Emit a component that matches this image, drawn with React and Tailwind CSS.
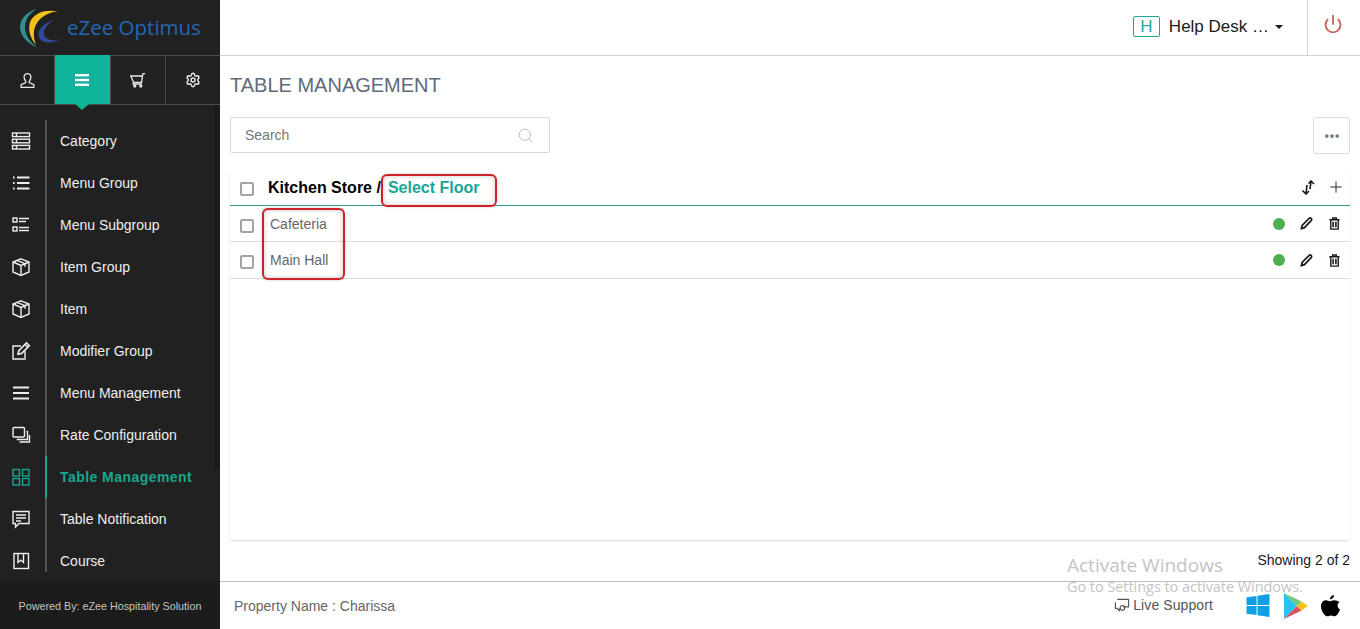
import { Search, Plus, Power, Ellipsis, Settings } from 'lucide-react'

const font = { fontFamily: '"Liberation Sans", Arial, sans-serif' }

// line icons traced from the sidebar
const icons = {
  category: (
    <>
      <rect x="1.5" y="2" width="17" height="3.6" />
      <rect x="1.5" y="8.2" width="17" height="3.6" />
      <rect x="1.5" y="14.4" width="17" height="3.6" />
      <path d="M5.5 2v3.6M5.5 8.2v3.6M5.5 14.4V18" />
    </>
  ),
  list: (
    <>
      <path d="M6 4.5h12.5M6 10h12.5M6 15.5h12.5" strokeWidth="1.8" />
      <path d="M2 4.5h1.6M2 10h1.6M2 15.5h1.6" strokeWidth="1.8" />
    </>
  ),
  sublist: (
    <>
      <rect x="2" y="3" width="4" height="4" />
      <rect x="2" y="12" width="4" height="4" />
      <path d="M8 3.5h10M8 6.5h7M8 12.5h10M8 15.5h10" />
    </>
  ),
  box: (
    <>
      <path d="M10 1.8 18 5v10l-8 3.5L2 15V5z" />
      <path d="M2 5l8 3.4L18 5M10 8.4v10M6 3.4l8 3.3v3" />
    </>
  ),
  edit: (
    <>
      <path d="M14 10v8H2V5h8" />
      <path d="M7 13.2l.8-3.5L15.5 2l2.8 2.8-7.7 7.6z" strokeWidth="1.6" />
      <path d="M14 3.5l2.8 2.8" />
    </>
  ),
  menu: <path d="M2 4.5h16M2 10h16M2 15.5h16" strokeWidth="1.8" />,
  copies: (
    <>
      <rect x="2" y="2.5" width="11.5" height="9.5" rx="1" />
      <path d="M15.5 6.5h1v8h-10v-1M18.5 10v7h-10" />
    </>
  ),
  grid: (
    <>
      <rect x="2" y="2.5" width="6.5" height="6.5" />
      <rect x="11.5" y="2.5" width="6.5" height="6.5" />
      <rect x="2" y="11.5" width="6.5" height="6.5" />
      <rect x="11.5" y="11.5" width="6.5" height="6.5" />
    </>
  ),
  chat: (
    <>
      <path d="M2 2.5h16v12H8l-3.5 3.5v-3.5H2z" />
      <path d="M5 6h10M5 9h10M5 12h5" />
    </>
  ),
  book: (
    <>
      <rect x="3" y="2.5" width="14.5" height="15" />
      <path d="M7 2.5v9l2.8-2.4 2.7 2.4v-9" />
    </>
  ),
}

const menuItems = [
  ['Category', 'category'],
  ['Menu Group', 'list'],
  ['Menu Subgroup', 'sublist'],
  ['Item Group', 'box'],
  ['Item', 'box'],
  ['Modifier Group', 'edit'],
  ['Menu Management', 'menu'],
  ['Rate Configuration', 'copies'],
  ['Table Management', 'grid', true],
  ['Table Notification', 'chat'],
  ['Course', 'book'],
]

function LineIcon({ name, className }) {
  return (
    <svg viewBox="0 0 20 20" fill="none" stroke="currentColor" strokeWidth="1.4" className={className}>
      {icons[name]}
    </svg>
  )
}

function Logo() {
  return (
    <svg viewBox="20 9 40 40" className="w-[40px] h-[40px] shrink-0">
      <path d="M37 9.5C24 14 20 22 20 28c0 9 8 17 17 20.5C29 42 24.5 35 25 27c.5-7 5-13 12-17.5z" fill="#2f8f8c" />
      <path d="M58 12.5C47 10 36 13 31 21c-4 8-1 18 5 25-3-8-3-16 1-22 4-6.5 12-11 21-11.5z" fill="#f2c21a" />
      <path d="M54 21c-8 2-14 7-15.5 13-.5 6 4.5 10 10.5 9.5 4 0 8-1.500 11-3-7 1.500-13 .5-15.500-3.500C42 32 47 25 54 21z" fill="#34479a" />
    </svg>
  )
}

function NavTab({ active, children, last }) {
  return (
    <div
      className={`relative flex-1 flex items-center justify-center ${
        active ? 'bg-[#0fb39a] text-white h-[49px] -mt-px' : 'text-[#e8e8e8] h-[48px]'
      } ${last ? '' : 'border-r border-[#4a4a4a]'}`}
    >
      {children}
      {active && (
        <span className="absolute left-1/2 -translate-x-1/2 top-full w-0 h-0 border-l-[7px] border-r-[7px] border-t-[6px] border-l-transparent border-r-transparent border-t-[#0fb39a]" />
      )}
    </div>
  )
}

function Sidebar() {
  return (
    <aside className="w-[220px] shrink-0 h-full flex flex-col bg-[#212121]">
      <div className="h-[56px] shrink-0 flex items-center pl-[20px] border-b border-[#4a4a4a]">
        <Logo />
        <span className="text-[20.5px] text-[#2468b4] ml-[7px] pb-[1px]" style={{ fontFamily: '"Open Sans", sans-serif' }}>
          eZee Optimus
        </span>
      </div>
      <div className="flex shrink-0 border-b border-[#4a4a4a]">
        <NavTab>
          <svg viewBox="0 0 20 20" fill="none" stroke="currentColor" strokeWidth="1.5" className="w-[17px] h-[17px] ml-[1px]">
            <path d="M10 2c-3 0-4.200 2-4 4.300.1 2 1.200 3.500 2 4.700v1.500L2.500 15v3h15v-3L12 12.500V11c.8-1.200 1.900-2.700 2-4.700C14.200 4 13 2 10 2z" />
          </svg>
        </NavTab>
        <NavTab active>
          <svg viewBox="0 0 14 12" fill="currentColor" className="w-[14px] h-[12px]">
            <rect width="14" height="2.4" />
            <rect y="4.8" width="14" height="2.4" />
            <rect y="9.6" width="14" height="2.4" />
          </svg>
        </NavTab>
        <NavTab>
          <svg viewBox="0 0 20 20" fill="none" stroke="currentColor" strokeWidth="1.7" className="w-[16px] h-[16px]">
            <path d="M1 5h14.500l-1 8H4.500zM15.500 5l.8-3H19M4.500 13l-.5 2h11" />
            <circle cx="6" cy="17.5" r="1.2" />
            <circle cx="13.5" cy="17.5" r="1.2" />
          </svg>
        </NavTab>
        <NavTab last>
          <Settings size={16} strokeWidth={2.2} />
        </NavTab>
      </div>
      <div className="relative flex-1 min-h-0 pt-[15px] overflow-hidden">
        <ul>
          {menuItems.map(([label, icon, active], i) => (
            <li key={label} className={`h-[42px] flex items-center ${active ? 'text-[#17a78f]' : 'text-[#eeeeee]'}`}>
              <span className="w-[45px] pr-[4px] flex justify-center">
                <LineIcon name={icon} className="w-[20px] h-[20px]" />
              </span>
              <span
                className={`w-[2px] self-start ${i === menuItems.length - 1 ? 'h-[32px]' : 'h-[42px]'} ${
                  active ? 'bg-[#17a78f]' : 'bg-[#555555]'
                }`}
              />
              <span className={`ml-[13px] text-[14px] ${active ? 'font-bold tracking-[0.45px]' : ''}`}>{label}</span>
            </li>
          ))}
        </ul>
        <span className="absolute right-0 top-0 w-[6px] h-[364px] bg-[#1a1a1a]" />
      </div>
      <div className="h-[47px] shrink-0 bg-[#1c1c1c] flex items-center justify-center pt-[1px] text-[10.75px] text-[#c4c4c4]">
        Powered By: eZee Hospitality Solution
      </div>
    </aside>
  )
}

function Header() {
  return (
    <header className="h-[56px] shrink-0 flex items-stretch justify-end border-b border-[#cfcfcf] bg-white">
      <div className="flex items-center mr-[24px] pb-[2px]">
        <span className="w-[27px] h-[21px] border border-[#1ea896] rounded-[2px] flex items-center justify-center text-[#2aa79a] text-[17px]">H</span>
        <span className="ml-[9px] text-[17px] text-[#1a1a1a]">Help Desk …</span>
        <span className="ml-[6px] w-0 h-0 border-l-[4px] border-r-[4px] border-t-[4px] border-l-transparent border-r-transparent border-t-[#1a1a1a]" />
      </div>
      <div className="w-[53px] flex items-center justify-center border-l border-[#d6d6d6] pb-[7px] pr-[2px]">
        <Power size={20} strokeWidth={2.2} className="text-[#c9615a]" />
      </div>
    </header>
  )
}

function RowCheck() {
  return <span className="w-[14px] h-[14px] mt-[4px] border-2 border-[#a3a3a3] rounded-[2px]" />
}

function Row({ label, height, textClass }) {
  return (
    <div className={`${height} flex items-center border-b border-[#dedede] pl-[10px] pr-[9px]`}>
      <RowCheck />
      <span className={`ml-[16px] text-[14px] text-[#666666] ${textClass}`}>{label}</span>
      <span className="ml-auto w-[12px] h-[12px] rounded-full bg-[#4caf50]" />
      <svg viewBox="0 0 14 14" className="ml-[15px] w-[13px] h-[13px]" fill="none" stroke="#1a1a1a" strokeWidth="1.8">
        <path d="M1.500 12.500l.8-3.500L9.800 1.500c.8-.6 1.500-.6 2.200 0s.8 1.500.2 2.200L4.800 11.500z" />
        <path d="M2 12l1-.3-.8-.8z" fill="#1a1a1a" />
      </svg>
      <svg viewBox="0 0 14 14" className="ml-[15px] w-[13px] h-[13px]" fill="none" stroke="#1a1a1a" strokeWidth="1.5">
        <path d="M1.500 3h11M5 3V1h4v2M3 3v10h8V3" />
        <path d="M5.500 5v6M8.500 5v6" strokeWidth="1.7" />
      </svg>
    </div>
  )
}

function Footer() {
  return (
    <footer className="h-[48px] shrink-0 flex items-center border-t border-[#bdbdbd] bg-white pl-[14px] pr-[20px]">
      <span className="text-[14px] text-[#666666] pt-[2px]">Property Name : Charissa</span>
      <span className="ml-auto flex items-center text-[14px] text-[#555555]">
        <svg viewBox="0 0 16 16" className="w-[16px] h-[15px] mr-[3px]" fill="none" stroke="#555555" strokeWidth="1.2">
          <path d="M3 1.500h12v8H9M1 4.500v6.500h2l2 2.500.5-2.500" />
          <circle cx="8.5" cy="10.5" r="2.5" />
        </svg>
        <span className="tracking-[0.1px]">Live Support</span>
      </span>
      <svg viewBox="0 0 24 24" className="ml-[33px] w-[24px] h-[23px]" fill="#0f9fe6">
        <path d="M0 3.500 10.500 2v9.500H0zM11.500 1.800 24 0v11.500H11.500zM0 12.500h10.500V22L0 20.500zM11.500 12.500H24V24l-12.500-1.800z" />
      </svg>
      <svg viewBox="0 0 24 26" className="ml-[14px] w-[24px] h-[26px]">
        <path d="M0 0v26l13-13z" fill="#27c4f0" />
        <path d="M0 0l13 13 4.500-4.500z" fill="#6ecb7c" />
        <path d="M0 26l13-13 4.500 4.500z" fill="#d9505c" />
        <path d="M17.500 8.500 24 13l-6.500 4.500L13 13z" fill="#f8c21c" />
      </svg>
      <svg viewBox="0 0 20 24" className="ml-[12px] w-[20px] h-[24px]" fill="#000000">
        <path d="M14 1c.1 2-1.800 4.400-4 4.200C9.800 3.200 12 1.100 14 1z" />
        <path d="M19.500 8c-2.800 1.700-2.500 6 .5 7.300-.8 2.600-3 7-5.300 7-1.300 0-2-.9-3.700-.9s-2.500.9-3.700.9C4.300 22.300 1 16.500 1 12.300 1 8.400 3.500 6.300 6 6.300c1.500 0 2.800 1 3.800 1s2.400-1.100 4.200-1.100c2.200 0 4.200 1 5.500 1.800z" />
      </svg>
    </footer>
  )
}

export default function App() {
  return (
    <div className="relative flex h-[629px] w-[1360px] overflow-hidden bg-white" style={font}>
      <Sidebar />
      <div className="flex-1 min-w-0 flex flex-col">
        <Header />
        <main className="flex-1 min-h-0 px-[10px] flex flex-col">
          <h1 className="mt-[16px] text-[20px] leading-[26px] text-[#5e6b78]">TABLE MANAGEMENT</h1>
          <div className="mt-[19px] flex justify-between items-start">
            <div className="w-[320px] h-[36px] border border-[#d9d9d9] rounded-[2px] flex items-center justify-between pl-[14px] pr-[15px]">
              <span className="text-[14px] text-[#777777]">Search</span>
              <Search size={17} strokeWidth={1.2} className="text-[#b5b5b5]" />
            </div>
            <div className="w-[37px] h-[37px] border border-[#dcdcdc] rounded-[3px] flex items-center justify-center">
              <Ellipsis size={18} strokeWidth={3} className="text-[#6c7a89]" />
            </div>
          </div>
          <section className="mt-[15px] h-[371px] rounded-[3px] shadow-[0_1px_2px_rgba(0,0,0,0.15)] bg-white">
            <div className="h-[37px] flex items-center border-b border-[#2a9d96] pl-[10px] pr-[5px]">
              <RowCheck />
              <span className="ml-[14px] mt-[1px] text-[16px] font-bold text-black">Kitchen Store /</span>
              <span className="ml-[7px] mt-[1px] text-[16px] font-bold text-[#17a598]">Select Floor</span>
              <svg viewBox="0 0 14 15" className="ml-auto w-[14px] h-[15px]" fill="none" stroke="#1a1a1a" strokeWidth="1.6">
                <path d="M9 9l1-7.500M7.500 3.500 10 1l3 3" />
                <path d="M6 5l-1 8.500M1.500 10.500 5 14l3-3" />
              </svg>
              <Plus size={18} strokeWidth={1.2} className="ml-[12px] text-[#1a1a1a]" />
            </div>
            <Row label="Cafeteria" height="h-[36px]" textClass="mt-[2px]" />
            <Row label="Main Hall" height="h-[37px]" textClass="" />
          </section>
          <div className="mt-[10px] text-right text-[14px] text-[#1a1a1a]">Showing 2 of 2</div>
        </main>
        <Footer />
      </div>

      {/* red annotation boxes sit on top of the screenshot */}
      <span className="absolute left-[381px] top-[174px] w-[116px] h-[33px] border-2 border-[#d02028] rounded-[6px] shadow-[inset_0_0_5px_rgba(0,0,0,0.22),0_0_3px_rgba(0,0,0,0.2)]" />
      <span className="absolute left-[262px] top-[208px] w-[83px] h-[72px] border-2 border-[#d02028] rounded-[6px] shadow-[inset_0_0_5px_rgba(0,0,0,0.22),0_0_3px_rgba(0,0,0,0.2)]" />

      {/* Windows watermark */}
      <div className="absolute left-[1067px] top-[553px] pointer-events-none text-[#c4c4c4]" style={{ fontFamily: '"Open Sans", sans-serif' }}>
        <div className="text-[19px] leading-[24px]">Activate Windows</div>
        <div className="text-[14.4px] leading-[20px]">Go to Settings to activate Windows.</div>
      </div>
    </div>
  )
}
